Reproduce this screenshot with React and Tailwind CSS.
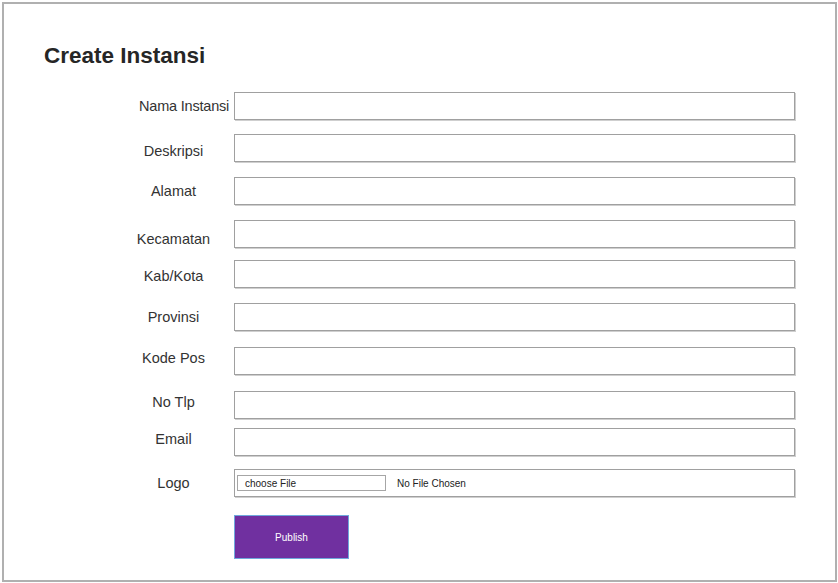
import { useState } from "react";

// baris form: label, offset vertikal label, jarak atas baris
const fields = [
  { label: "Nama Instansi", mt: "mt-[23px]", lbl: "pl-[135px] pr-0 text-left tracking-[-0.2px]" },
  { label: "Deskripsi", mt: "mt-[14px]", lbl: "mt-[5px]" },
  { label: "Alamat", mt: "mt-[15px]", lbl: "" },
  { label: "Kecamatan", mt: "mt-[15px]", lbl: "mt-[9px]" },
  { label: "Kab/Kota", mt: "mt-[12px]", lbl: "mt-[3px]" },
  { label: "Provinsi", mt: "mt-[15px]", lbl: "" },
  { label: "Kode Pos", mt: "mt-[16px]", lbl: "mb-[7px]" },
  { label: "No Tlp", mt: "mt-[16px]", lbl: "mb-[7px]" },
  { label: "Email", mt: "mt-[9px]", lbl: "mb-[7px]" },
];

export default function App() {
  const [values, setValues] = useState({});

  return (
    <div className="h-[583px] w-[838px] bg-white p-[2px] font-['Liberation_Sans',Arial,sans-serif]">
      <div className="h-[580px] w-[835px] border-2 border-[#b0b0b0]">
        <h1 className="pl-[40px] pt-[39px] text-[22.5px] font-bold leading-[26px] text-[#262626]">
          Create Instansi
        </h1>

        {fields.map((f) => (
          <div key={f.label} className={`flex items-center ${f.mt}`}>
            <label
              className={`w-[230px] shrink-0 whitespace-nowrap pl-[126px] pr-[17px] text-center text-[14.5px] leading-[18px] text-[#333333] ${f.lbl}`}
            >
              {f.label}
            </label>
            <input
              type="text"
              value={values[f.label] || ""}
              onChange={(e) => setValues({ ...values, [f.label]: e.target.value })}
              className="h-[28px] w-[561px] border border-[#a0a0a0] bg-white shadow-[1px_1px_0_#cfcfcf] outline-none"
            />
          </div>
        ))}

        {/* LOGO */}
        <div className="mt-[13px] flex items-center">
          <label className="w-[230px] shrink-0 pl-[126px] pr-[17px] text-center text-[14.5px] leading-[18px] text-[#333333]">
            Logo
          </label>
          <div className="flex h-[28px] w-[561px] items-center border border-[#a0a0a0] shadow-[1px_1px_0_#cfcfcf]">
            <div className="ml-[2px] flex h-[16px] w-[149px] items-center border border-[#a6a6a6] pl-[7px] text-[10px] text-[#222222]">
              choose File
            </div>
            <span className="ml-[11px] text-[10px] text-[#222222]">No File Chosen</span>
          </div>
        </div>

        <button className="ml-[230px] mt-[18px] flex h-[44px] w-[115px] items-center justify-center border border-[#6fa8dc] bg-[#7030a0] text-[10px] text-white">
          Publish
        </button>
      </div>
    </div>
  );
}
